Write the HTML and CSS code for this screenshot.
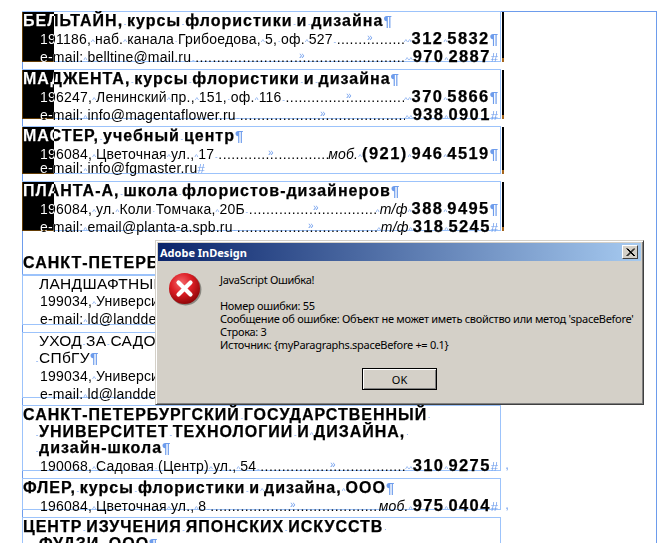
FILE: index.html
```html
<!DOCTYPE html>
<html lang="ru">
<head>
<meta charset="utf-8">
<title>Adobe InDesign</title>
<link rel="stylesheet" href="styles.css">
</head>
<body>
<main class="page">
  <div class="column">
    <section class="frame f1">
      <div class="head">БЕЛЬТАЙН,<i class="d">-</i>курсы<i class="d">-</i>флористики<i class="d">-</i>и<i class="d">-</i>дизайна<i class="p">¶</i></div>
      <div class="row"><span>191186,<i class="h">^</i>наб.<i class="h">^</i>канала<i class="h">·</i>Грибоедова,<i class="h">^</i>5,<i class="h">·</i>оф.<i class="h">^</i>527<i class="d">-</i></span><span class="dots">.....................................................................................</span><i class="tab t367">»</i><b class="phone"><i class="h">^^</i>312<i class="h">^</i>5832</b><i class="p">¶</i></div>
      <div class="row"><span>e-mail:<i class="h">^</i>belltine@mail.ru<i class="d">-</i></span><span class="dots">.....................................................................................</span><i class="tab t299">»</i><b class="phone"><i class="h">^^</i>970<i class="h">^</i>2887</b><i class="e">#</i></div>
      <span class="bar"></span><span class="edge"></span>
    </section>
    <section class="frame f2">
      <div class="head">МАДЖЕНТА,<i class="d">-</i>курсы<i class="d">-</i>флористики<i class="d">-</i>и<i class="d">-</i>дизайна<i class="p">¶</i></div>
      <div class="row"><span>196247,<i class="h">^</i>Ленинский<i class="h">^</i>пр.,<i class="h">^</i>151,<i class="h">·</i>оф.<i class="h">^</i>116<i class="d">-</i></span><span class="dots">.....................................................................................</span><i class="tab t346">»</i><b class="phone"><i class="h">^^</i>370<i class="h">^</i>5866</b><i class="p">¶</i></div>
      <div class="row"><span>e-mail:<i class="h">^</i>info@magentaflower.ru<i class="d">-</i></span><span class="dots">.....................................................................................</span><i class="tab t320">»</i><b class="phone"><i class="h">^^</i>938<i class="h">^</i>0901</b><i class="e">#</i></div>
      <span class="bar"></span><span class="edge"></span>
    </section>
    <section class="frame f3">
      <div class="head">МАСТЕР,<i class="d">-</i>учебный<i class="d">-</i>центр<i class="p">¶</i></div>
      <div class="row"><span>196084,<i class="h">^</i>Цветочная<i class="h">^</i>ул.,<i class="h">^</i>17<i class="d">-</i></span><span class="dots">.....................................................................................</span><i class="tab t268">»</i><em class="label">моб.</em><b class="phone"><i class="h">^</i>(921)<i class="h">^</i>946<i class="h">^</i>4519</b><i class="p">¶</i></div>
      <div class="row tight"><span>e-mail:<i class="h">^</i>info@fgmaster.ru</span><i class="e">#</i></div>
      <span class="bar"></span><span class="edge"></span>
    </section>
    <section class="frame f4">
      <div class="head">ПЛАНТА-А,<i class="d">-</i>школа<i class="d">-</i>флористов-дизайнеров<i class="p">¶</i></div>
      <div class="row"><span>196084,<i class="h">^</i>ул.<i class="h">^</i>Коли<i class="h">·</i>Томчака,<i class="h">^</i>20Б<i class="d">-</i></span><span class="dots">.....................................................................................</span><i class="tab t313">»</i><em class="label"><i class="h">^</i>т/ф</em><b class="phone"><i class="h">^</i>388<i class="h">^</i>9495</b><i class="p">¶</i></div>
      <div class="row"><span>e-mail:<i class="h">^</i>email@planta-a.spb.ru<i class="d">-</i></span><span class="dots">.....................................................................................</span><i class="tab t308">»</i><em class="label"><i class="h">^</i>т/ф</em><b class="phone"><i class="h">^</i>318<i class="h">^</i>5245</b><i class="e">#</i></div>
      <span class="bar"></span><span class="edge"></span>
    </section>
    <section class="frame f5 open">
      <div class="head">САНКТ-ПЕТЕРБУРГСКИЙ ГОСУДАРСТВЕННЫЙ</div>
    </section>
    <section class="frame f6">
      <div class="name">ЛАНДШАФТНЫЙ ДИЗАЙН<i class="p">¶</i></div>
      <div class="row"><span>199034,<i class="h">^</i>Университетская наб., 7/9</span></div>
      <div class="row"><span>e-mail:<i class="h">^</i>ld@landdesign.ru</span></div>
    </section>
    <section class="frame f7">
      <div class="name">УХОД<i class="d">-</i>ЗА<i class="d">-</i>САДОМ</div>
      <div class="name hang"><i class="d">-</i>СПбГУ<i class="p">¶</i></div>
      <div class="row"><span>199034,<i class="h">^</i>Университетская наб., 7/9</span></div>
      <div class="row"><span>e-mail:<i class="h">^</i>ld@landdesign.ru</span></div>
    </section>
    <section class="frame f8">
      <div class="head">САНКТ-ПЕТЕРБУРГСКИЙ<i class="d">-</i>ГОСУДАРСТВЕННЫЙ<i class="h">·</i></div>
      <div class="head hang"><i class="d">-</i>УНИВЕРСИТЕТ<i class="d">-</i>ТЕХНОЛОГИИ<i class="d">-</i>И<i class="h">^</i>ДИЗАЙНА,<i class="h">·</i></div>
      <div class="head hang"><i class="d">-</i>дизайн-школа<i class="p">¶</i></div>
      <div class="row"><span>190068,<i class="h">^</i>Садовая<i class="h">·</i>(Центр)<i class="h">^</i>ул.,<i class="h">^</i>54<i class="d">-</i></span><span class="dots">.....................................................................................</span><i class="tab t330">»</i><b class="phone"><i class="h">^^</i>310<i class="h">^</i>9275</b><i class="e">#</i><i class="out">,</i></div>
    </section>
    <section class="frame f9">
      <div class="head">ФЛЕР,<i class="d">-</i>курсы<i class="d">-</i>флористики<i class="d">-</i>и<i class="h">^</i>дизайна,<i class="h">^</i>ООО<i class="p">¶</i></div>
      <div class="row"><span>196084,<i class="h">^</i>Цветочная<i class="h">^</i>ул.,<i class="h">^</i>8<i class="d">-</i></span><span class="dots">.....................................................................................</span><i class="tab t290">»</i><em class="label">моб.</em><b class="phone"><i class="h">^</i>975<i class="h">^</i>0404</b><i class="e">#</i><i class="out">,</i></div>
    </section>
    <section class="frame f10">
      <div class="head">ЦЕНТР<i class="d">-</i>ИЗУЧЕНИЯ<i class="d">-</i>ЯПОНСКИХ<i class="d">-</i>ИСКУССТВ<i class="h">·</i></div>
      <div class="head hang"><i class="d">-</i>ФУДЗИ,<i class="d">-</i>ООО<i class="p">¶</i></div>
    </section>
  </div>

  <div class="dialog" role="dialog">
    <header class="titlebar">
      <span>Adobe InDesign</span>
      <button class="close" aria-label="Закрыть"><svg width="9" height="9" viewBox="0 0 9 9"><path d="M0.5 0.5 L8 8 M1.5 0.5 L9 8 M8 0.5 L0.5 8 M9 0.5 L1.5 8" stroke="#000" stroke-width="1" fill="none"/></svg></button>
    </header>
    <div class="dialog-body">
      <svg class="stop" width="34" height="34" viewBox="0 0 34 34">
        <defs>
          <radialGradient id="red" cx="40%" cy="32%" r="70%">
            <stop offset="0" stop-color="#f4686c"/>
            <stop offset=".5" stop-color="#dc1e25"/>
            <stop offset="1" stop-color="#8e0508"/>
          </radialGradient>
        </defs>
        <circle cx="17.6" cy="17.6" r="15.8" fill="#8a8780"/>
        <circle cx="16.5" cy="16.5" r="15.5" fill="url(#red)"/>
        <path d="M10.5 10.5 L22.5 22.5 M22.5 10.5 L10.5 22.5" stroke="#fff" stroke-width="4.2" stroke-linecap="round" fill="none"/>
      </svg>
      <div class="message">
        <p>JavaScript Ошибка!</p>
        <p class="gap">Номер ошибки: 55</p>
        <p>Сообщение об ошибке: Объект не может иметь свойство или метод 'spaceBefore'</p>
        <p>Строка: 3</p>
        <p>Источник: {myParagraphs.spaceBefore += 0.1}</p>
      </div>
    </div>
    <div class="actions"><button class="ok">OK</button></div>
  </div>
</main>
</body>
</html>
```
FILE: styles.css
```css
html, body { margin: 0; padding: 0; height: 543px; overflow: hidden; background: #fff; }
.page {
  position: relative;
  box-sizing: border-box;
  width: 635px;
  height: 532px;
  margin: 11px 0 0 22px;
  border: solid #6d9cec;
  border-width: 1px 1px 0 1px;
  background: #fff;
  font-family: "Liberation Sans", Arial, sans-serif;
  color: #000;
}
.column { display: flex; flex-direction: column; gap: 7px; width: 480px; margin: -1px 0 0 -1px; }
.frame { position: relative; box-sizing: border-box; width: 479px; border: 1px solid #9cc3fb; }
.open { border-top-color: transparent; border-left-color: transparent; }
.f1 { height: 51px; }
.f2 { height: 50px; }
.f3 { height: 48px; }
.f4 { height: 50px; }
.f5 { height: 29px; margin-top: 8px; padding-top: 7px; }
.f6 { height: 50px; margin-top: -7px; }
.f7 { height: 66px; }
.f8 { height: 66px; }
.f8 .head { height: 16.5px; }
.f9 { height: 32px; }
.f10 { height: 40px; }
.head { height: 17px; font: bold 16px/17px "Liberation Sans", Arial, sans-serif; letter-spacing: 1px; white-space: nowrap; -webkit-text-stroke: .25px #000; }
.name { height: 16px; padding-left: 16px; font-size: 15.5px; line-height: 15px; letter-spacing: .3px; white-space: nowrap; }
.f7 .hang { height: 18px; line-height: 18px; }
.hang { padding-left: 12px; }
.row { position: relative; display: flex; align-items: baseline; height: 18px; padding-left: 17px; padding-right: 2px; font-size: 14px; line-height: 18px; letter-spacing: .2px; white-space: nowrap; }
.tight { height: 15px; line-height: 12px; }
.dots { flex: 1 1 0; min-width: 0; overflow: hidden; letter-spacing: .4px; }
.phone { font-size: 16.5px; letter-spacing: 1.4px; -webkit-text-stroke: .25px #000; }
.label { font-size: 14px; }
.h, .d, .tab, .p, .e, .out { font-style: normal; font-weight: 400; color: #6d9cec; -webkit-text-stroke: 0; }
.h, .d { display: inline-block; min-width: 4px; font-size: 8px; letter-spacing: 0; text-align: center; }
.p { font-size: 15px; font-weight: 700; letter-spacing: 0; }
.e { font-size: 13px; letter-spacing: 0; }
.tab { position: absolute; top: 0; font-size: 10px; }
.out { position: absolute; right: -9px; top: 0; font-size: 13px; }
.t367 { left: 344px; } .t299 { left: 276px; } .t346 { left: 323px; } .t320 { left: 297px; }
.t268 { left: 245px; } .t313 { left: 290px; } .t308 { left: 285px; } .t330 { left: 307px; } .t290 { left: 267px; }
.bar { position: absolute; left: -1px; top: 0; bottom: -1px; width: 32px; background: #fff; mix-blend-mode: difference; }
.edge { position: absolute; right: -4px; top: 0; bottom: -1px; width: 2px; background: linear-gradient(#000 calc(100% - 4px), #a4651c 0); }

.dialog {
  position: absolute;
  left: 132px;
  top: 228px;
  box-sizing: border-box;
  width: 489px;
  height: 165px;
  padding: 2px;
  background: #d4d0c8;
  border: 1px solid;
  border-color: #d4d0c8 #404040 #404040 #d4d0c8;
  box-shadow: inset 1px 1px 0 #fff, inset -1px -1px 0 #808080;
  font-family: "Noto Sans", Tahoma, sans-serif;
  font-size: 11px;
  color: #000;
}
.titlebar { display: flex; align-items: center; justify-content: space-between; height: 18px; padding: 0 3px 0 2px; background: linear-gradient(90deg, #0a246a, #a6caf0); color: #fff; font-weight: 700; font-size: 11px; }
.close { display: flex; align-items: center; justify-content: center; box-sizing: border-box; width: 16px; height: 14px; padding: 0; background: #d4d0c8; border: 1px solid; border-color: #fff #404040 #404040 #fff; }
.dialog-body { display: flex; height: 107px; }
.stop { flex: none; margin: 11px 0 0 10px; }
.message { margin: 12px 0 0 18px; line-height: 13px; letter-spacing: -.3px; white-space: nowrap; }
.message p { margin: 0; }
.message .gap { margin-top: 13px; }
.actions { display: flex; justify-content: center; }
.ok { box-sizing: border-box; width: 75px; height: 22px; padding: 0; background: #d4d0c8; border: 1px solid #000; box-shadow: inset 1px 1px 0 #fff, inset -1px -1px 0 #808080; font: 11px "Noto Sans", Tahoma, sans-serif; color: #000; }
```
